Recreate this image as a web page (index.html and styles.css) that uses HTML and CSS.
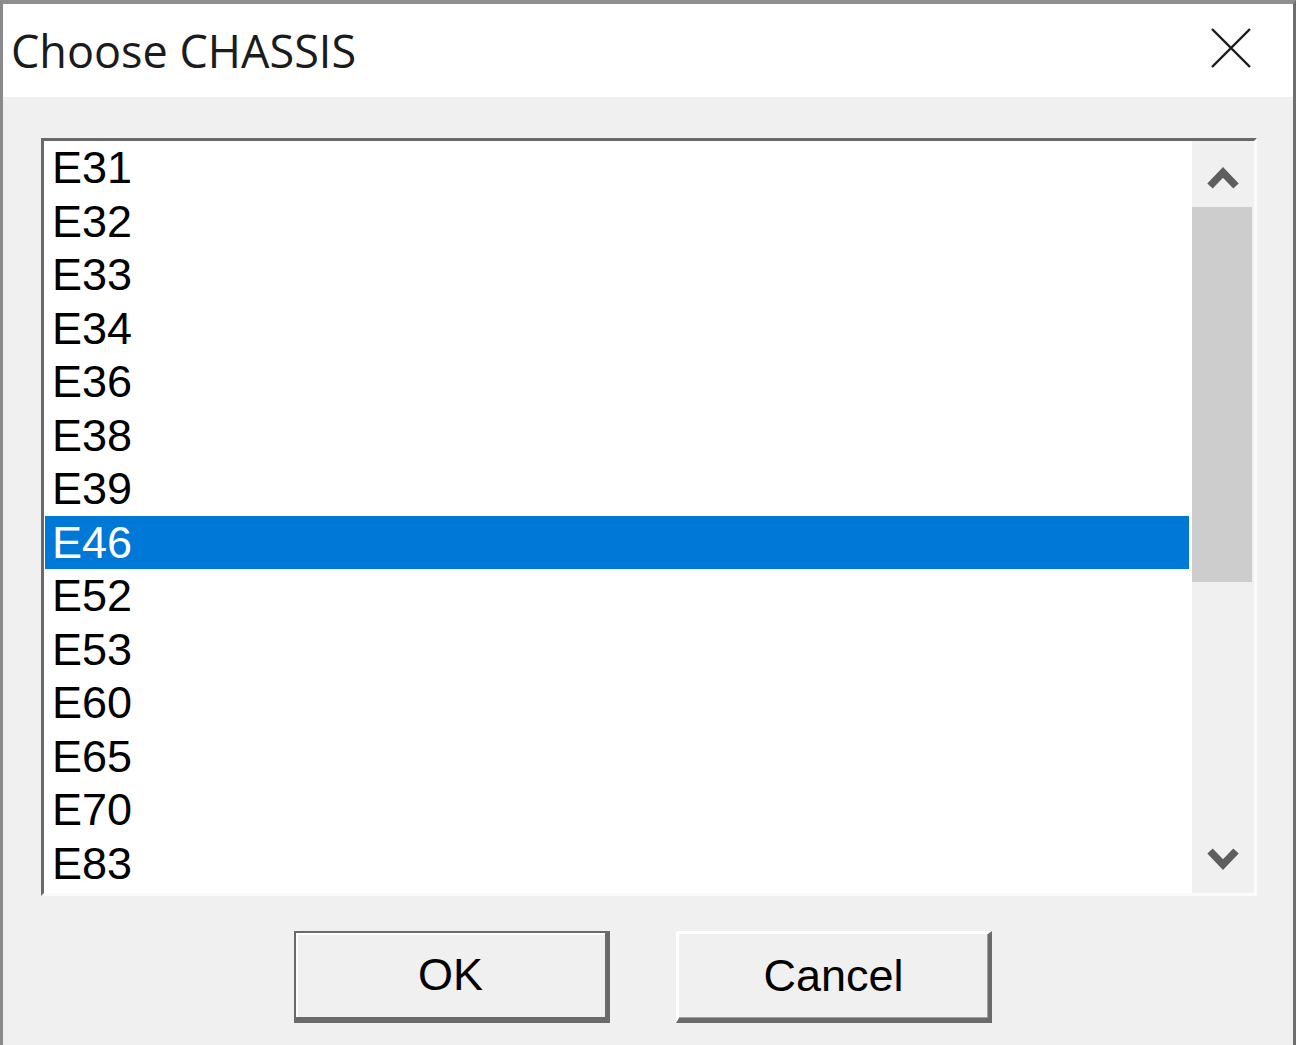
FILE: index.html
```html
<!DOCTYPE html>
<html lang="en">

<head>
    <meta charset="UTF-8">
    <title>Choose CHASSIS</title>
    <link rel="stylesheet" href="styles.css">
</head>

<body>
    <div class="window">
        <div class="titlebar">
            <span class="title">Choose CHASSIS</span>
            <svg class="close" width="40" height="40" viewBox="0 0 40 40">
                <path d="M1 1 L39 39 M39 1 L1 39" stroke="#1a1a1a" stroke-width="2.4" fill="none" />
            </svg>
        </div>

        <div class="content">
            <div class="listbox">
                <ul class="items">
                    <li>E31</li>
                    <li>E32</li>
                    <li>E33</li>
                    <li>E34</li>
                    <li>E36</li>
                    <li>E38</li>
                    <li>E39</li>
                    <li class="selected">E46</li>
                    <li>E52</li>
                    <li>E53</li>
                    <li>E60</li>
                    <li>E65</li>
                    <li>E70</li>
                    <li>E83</li>
                </ul>
                <div class="scrollbar">
                    <div class="arrow arrow-up">
                        <svg width="32" height="26" viewBox="0 0 32 26">
                            <path d="M3 22 L16 8.5 L29 22" stroke="#5e5e5e" stroke-width="7.5" fill="none" />
                        </svg>
                    </div>
                    <div class="thumb"></div>
                    <div class="track"></div>
                    <div class="arrow">
                        <svg width="32" height="26" viewBox="0 0 32 26">
                            <path d="M3 4 L16 17.5 L29 4" stroke="#5e5e5e" stroke-width="7.5" fill="none" />
                        </svg>
                    </div>
                </div>
            </div>

            <div class="buttons">
                <button class="btn btn-default">OK</button>
                <button class="btn">Cancel</button>
            </div>
        </div>
    </div>
</body>

</html>
```

FILE: styles.css
```css
body {
    margin: 0;
    background: #f0f0f0;
}

.window {
    height: 1045px;
    box-sizing: border-box;
    border-top: 4px solid #8f8f8f;
    border-left: 3px solid #8a8a8a;
    border-right: 3px solid #6e6e6e;
    display: flex;
    flex-direction: column;
}

.titlebar {
    height: 93px;
    background: #ffffff;
    display: flex;
    align-items: center;
    justify-content: space-between;
    padding: 0 42px 0 8px;
}

.title {
    font-family: "Open Sans", "Noto Sans", sans-serif;
    font-size: 45px;
    color: #1b1b1b;
    margin-top: 0;
}

.close {
    margin-top: -5px;
}

.content {
    flex: 1;
    background: #f0f0f0;
    padding: 41px 36px 0 38px;
}

.listbox {
    height: 758px;
    box-sizing: border-box;
    border-top: 3px solid #696969;
    border-left: 3px solid #696969;
    border-right: 3px solid #fbfbfb;
    border-bottom: 3px solid #fbfbfb;
    background: #ffffff;
    display: flex;
}

.items {
    flex: 1;
    list-style: none;
    margin: 0;
    padding: 0 3px 0 1px;
    font-family: "Liberation Sans", Arial, sans-serif;
    font-size: 45px;
    color: #000;
}

.items li {
    height: 53.5px;
    line-height: 54.5px;
    padding-left: 7px;
}

.items .selected {
    background: #0078d7;
    color: #ffffff;
}

.scrollbar {
    width: 62px;
    background: #f0f0f0;
    display: flex;
    flex-direction: column;
}

.arrow {
    height: 66px;
    display: flex;
    align-items: center;
    justify-content: center;
}

.arrow-up svg {
    margin-top: 5px;
}

.thumb {
    height: 375px;
    margin-right: 2px;
    background: #cdcdcd;
}

.track {
    flex: 1;
}

.buttons {
    display: flex;
    justify-content: center;
    gap: 66px;
    margin-top: 35px;
    padding-right: 12px;
}

.btn {
    width: 316px;
    height: 92px;
    box-sizing: border-box;
    background: #f0f0f0;
    font-family: "Liberation Sans", Arial, sans-serif;
    font-size: 45px;
    color: #000;
    border-top: 3px solid #ffffff;
    border-left: 3px solid #ffffff;
    border-right: 4px solid #6a6a6a;
    border-bottom: 5px solid #6a6a6a;
    box-shadow: inset -1px -1px 0 #a0a0a0;
    padding: 0;
}

.btn-default {
    border: 2px solid #6a6a6a;
    border-right-width: 5px;
    border-bottom-width: 6px;
    box-shadow: inset 2px 2px 0 #ffffff;
}
```
